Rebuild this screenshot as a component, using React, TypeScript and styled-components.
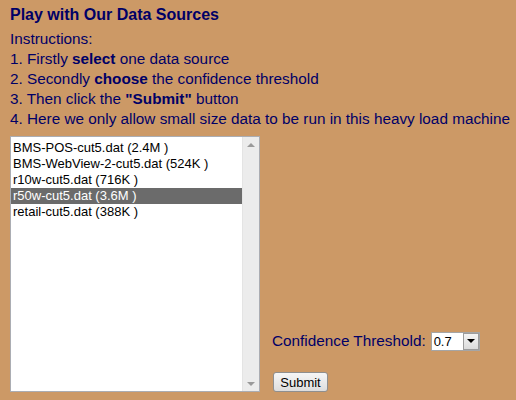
import React from "react";
import styled, { createGlobalStyle } from "styled-components";

const GlobalStyle = createGlobalStyle`
  html, body {
    margin: 0;
    padding: 0;
    background: #cc9966;
  }
  body {
    font-family: "Liberation Sans", Arial, sans-serif;
  }
`;

const Page = styled.div`
  width: 516px;
  height: 400px;
  box-sizing: border-box;
  padding: 5px 10px 0 10px;
  background: #cc9966;
  color: #000066;
  overflow: hidden;
`;

const Title = styled.div`
  font-size: 16px;
  font-weight: bold;
  line-height: 20px;
  margin-bottom: 4px;
`;

const Line = styled.div`
  font-size: 15.3px;
  line-height: 20px;
  white-space: nowrap;
`;

const FormRow = styled.div`
  display: flex;
  align-items: flex-end;
  margin-top: 7px;
`;

const ListBox = styled.div`
  width: 250px;
  height: 256px;
  box-sizing: border-box;
  border: 1px solid #abadb3;
  background: #ffffff;
  display: flex;
`;

const Options = styled.div`
  flex: 1;
  padding-top: 3px;
`;

const Option = styled.div<{ selected?: boolean }>`
  height: 16px;
  line-height: 16px;
  font-size: 13px;
  padding-left: 2px;
  color: ${({ selected }) => (selected ? "#ffffff" : "#000000")};
  background: ${({ selected }) => (selected ? "#6b6b6b" : "transparent")};
  white-space: nowrap;
`;

const ScrollBar = styled.div`
  width: 16px;
  background: #ececec;
  border-left: 1px solid #e4e4e4;
  display: flex;
  flex-direction: column;
  justify-content: space-between;
  align-items: center;
  padding: 6px 0 5px;
`;

const Arrow = styled.div<{ down?: boolean }>`
  width: 0;
  height: 0;
  border-left: 4px solid transparent;
  border-right: 4px solid transparent;
  ${({ down }) =>
    down ? "border-top: 4px solid #9a9a9a;" : "border-bottom: 4px solid #9a9a9a;"}
`;

const Side = styled.div`
  margin-left: 12px;
  display: flex;
  flex-direction: column;
`;

const ThresholdRow = styled.div`
  display: flex;
  align-items: center;
  font-size: 15.3px;
  line-height: 20px;
`;

const Select = styled.div`
  margin-left: 5px;
  width: 49px;
  height: 19px;
  box-sizing: border-box;
  border: 1px solid #a5a5a5;
  background: #ffffff;
  display: flex;
  align-items: stretch;
`;

const SelectValue = styled.div`
  flex: 1;
  font-size: 13px;
  line-height: 17px;
  padding-left: 2px;
  color: #000000;
`;

const SelectButton = styled.div`
  width: 16px;
  box-sizing: border-box;
  border: 1px solid #9c9c9c;
  background: linear-gradient(#f4f4f4, #dcdcdc);
  display: flex;
  align-items: center;
  justify-content: center;
`;

const SmallArrow = styled.div`
  width: 0;
  height: 0;
  border-left: 4px solid transparent;
  border-right: 4px solid transparent;
  border-top: 4px solid #000000;
`;

const SubmitButton = styled.button`
  margin: 21px 0 0 1px;
  align-self: flex-start;
  width: 55px;
  height: 20px;
  padding: 0;
  font-family: "Liberation Sans", Arial, sans-serif;
  font-size: 13px;
  color: #000000;
  border: 1px solid #8f8f8f;
  border-radius: 3px;
  background: linear-gradient(#f6f6f6, #dddddd);
`;

const sources = [
  "BMS-POS-cut5.dat (2.4M )",
  "BMS-WebView-2-cut5.dat (524K )",
  "r10w-cut5.dat (716K )",
  "r50w-cut5.dat (3.6M )",
  "retail-cut5.dat (388K )",
];

const App: React.FC = () => {
  return (
    <Page>
      <GlobalStyle />
      <Title>Play with Our Data Sources</Title>
      <Line>Instructions:</Line>
      <Line>
        1. Firstly <b>select</b> one data source
      </Line>
      <Line>
        2. Secondly <b>choose</b> the confidence threshold
      </Line>
      <Line>
        3. Then click the <b>"Submit"</b> button
      </Line>
      <Line>4. Here we only allow small size data to be run in this heavy load machine</Line>
      <FormRow>
        <ListBox>
          <Options>
            {sources.map((s, i) => (
              <Option key={s} selected={i === 3}>
                {s}
              </Option>
            ))}
          </Options>
          <ScrollBar>
            <Arrow />
            <Arrow down />
          </ScrollBar>
        </ListBox>
        <Side>
          <ThresholdRow>
            Confidence Threshold:
            <Select>
              <SelectValue>0.7</SelectValue>
              <SelectButton>
                <SmallArrow />
              </SelectButton>
            </Select>
          </ThresholdRow>
          <SubmitButton>Submit</SubmitButton>
        </Side>
      </FormRow>
    </Page>
  );
};

export default App;
